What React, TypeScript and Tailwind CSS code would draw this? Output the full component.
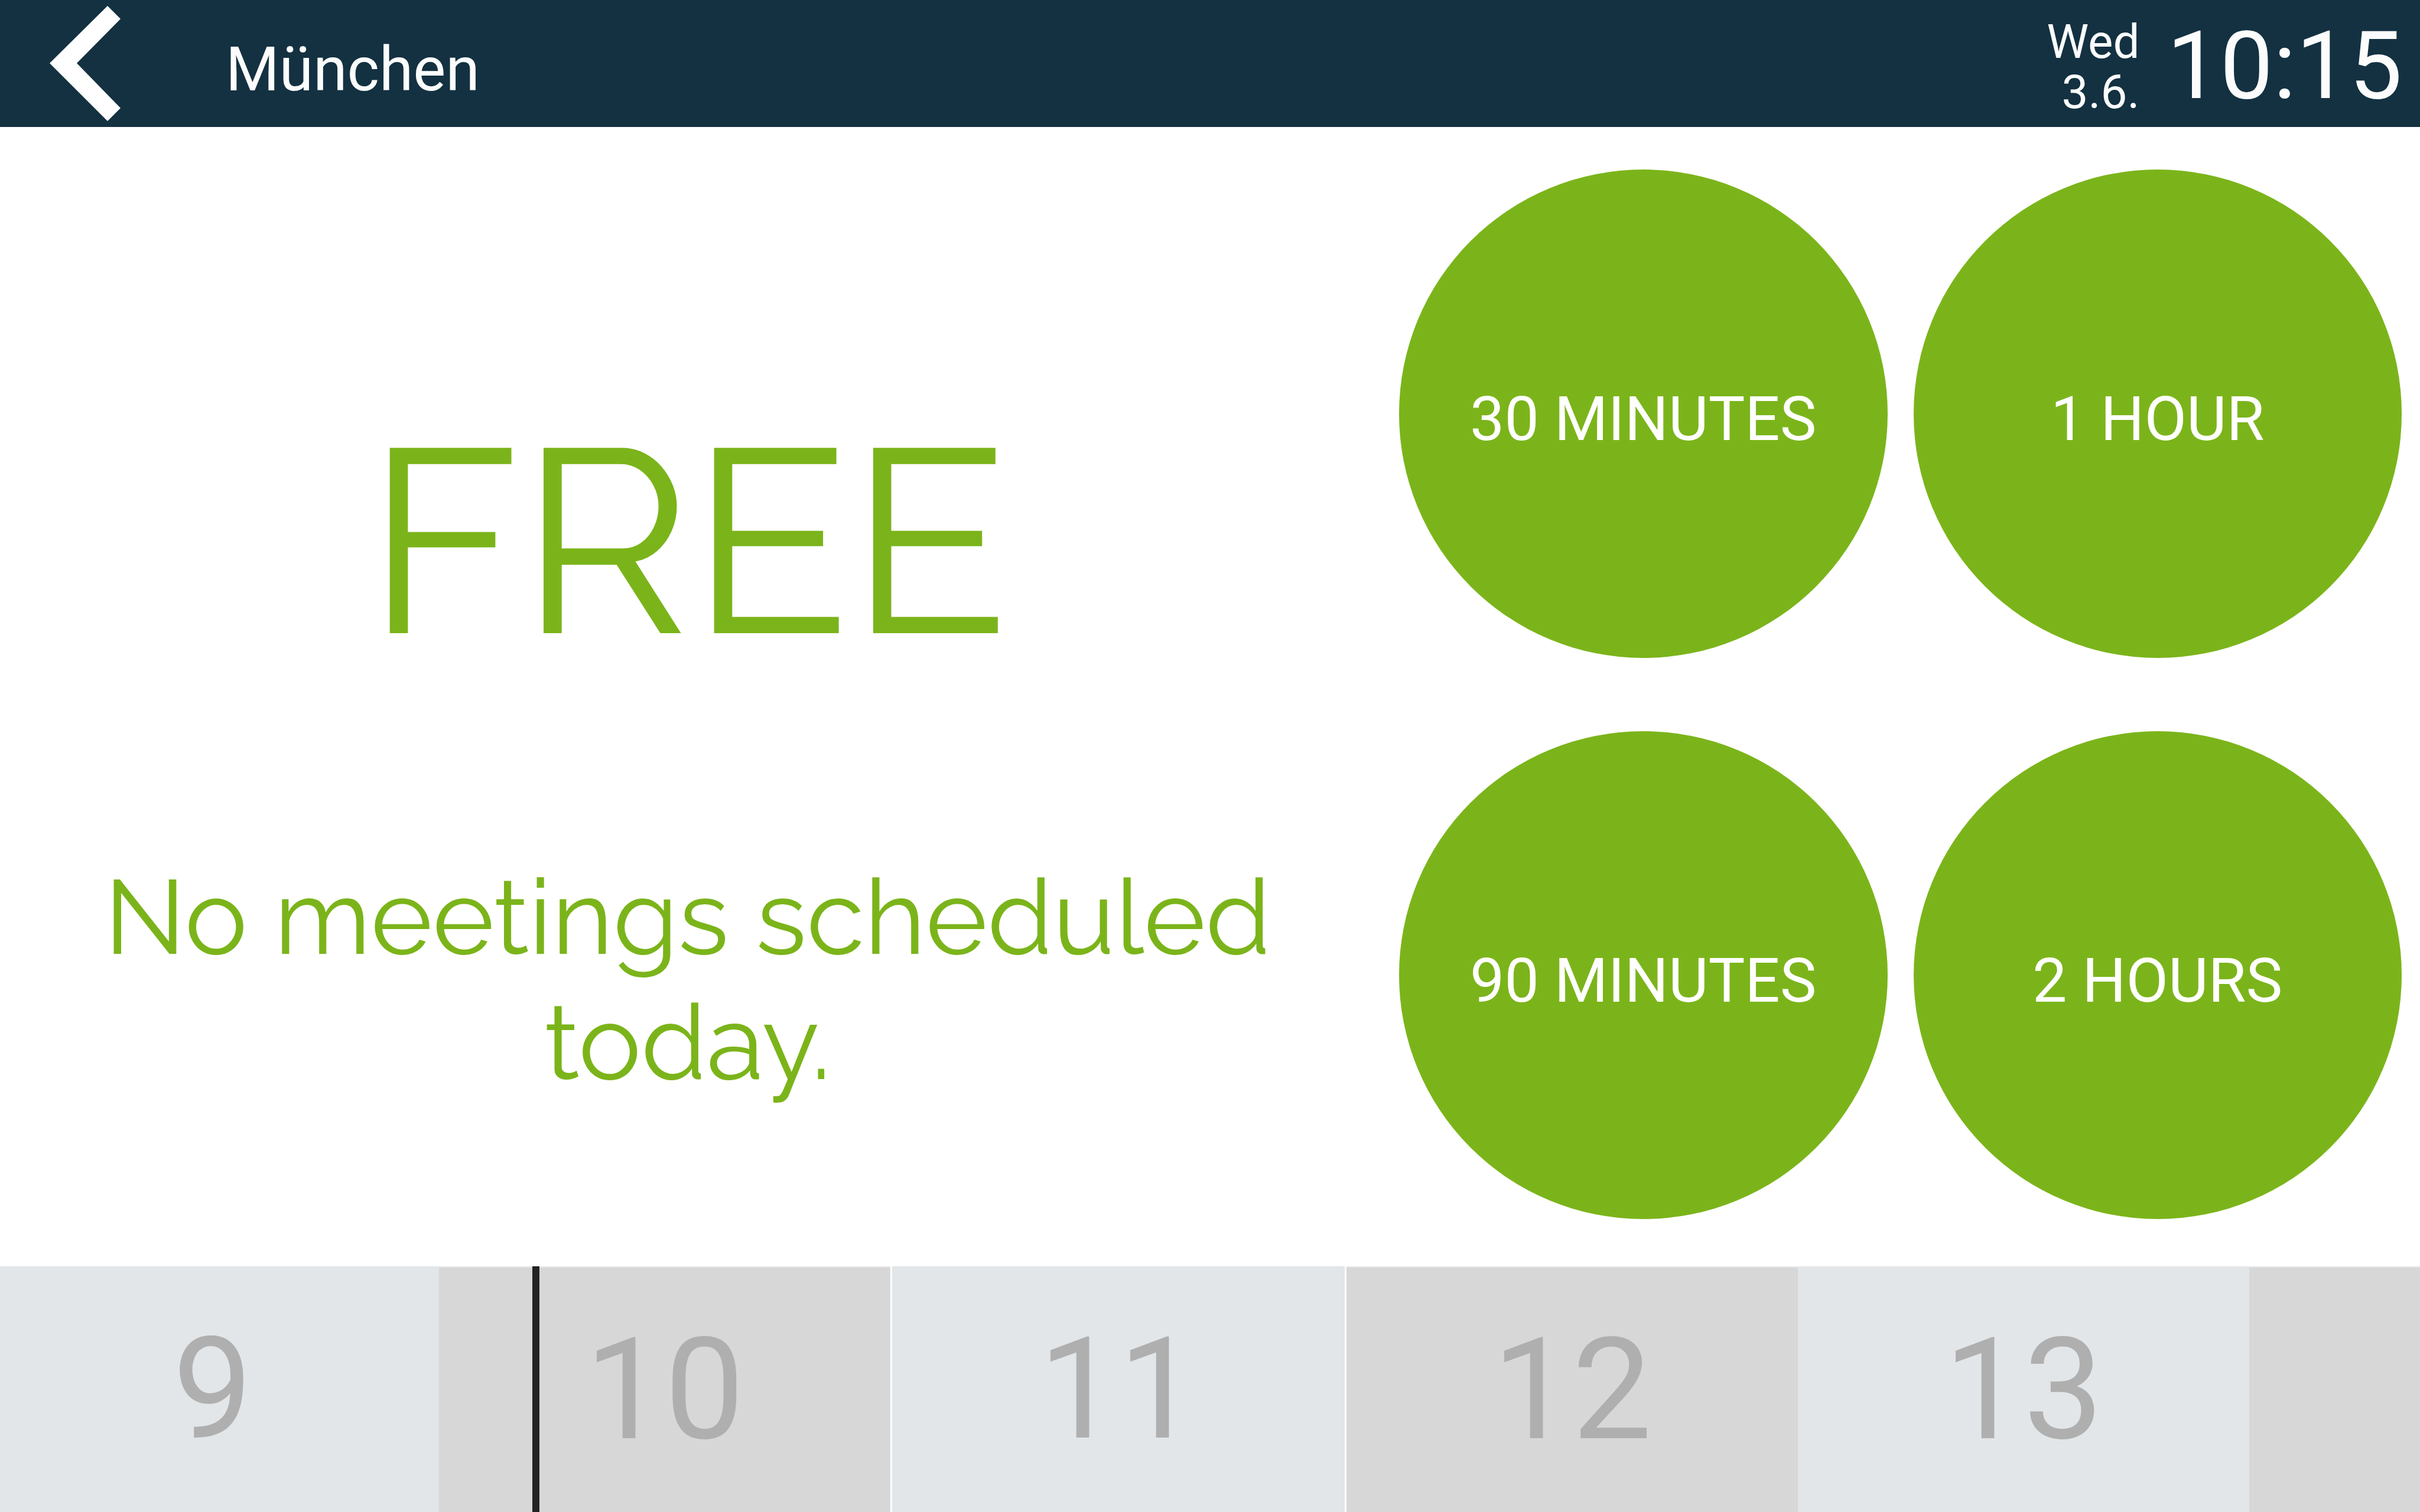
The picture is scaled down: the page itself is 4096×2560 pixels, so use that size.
const durations = ['30 MINUTES', '1 HOUR', '90 MINUTES', '2 HOURS'];

type Slot = { hour: string; className: string };

const slots: Slot[] = [
  { hour: '9', className: '-ml-[23px] w-[766px] bg-[#e2e6e8]' },
  { hour: '10', className: 'w-[764px] border-t-2 border-[#e8e8e8] bg-[#d7d7d7]' },
  { hour: '11', className: 'mx-[3px] w-[766px] bg-[#e2e6e8]' },
  { hour: '12', className: 'w-[764px] border-t-2 border-[#e8e8e8] bg-[#d7d7d7]' },
  { hour: '13', className: 'w-[764px] border-t-2 border-[#e8e8e8] bg-[#e2e6e8]' },
];

function Header() {
  return (
    <header className="flex h-[215px] items-center bg-[#133141] text-[#fcfcfc]">
      <button type="button" aria-label="Back" className="pl-20">
        <svg viewBox="80 0 128 215" className="h-[215px] w-32" fill="#ffffff" aria-hidden="true">
          <path d="M84 107 182 10 204 32 130 107 204 183 182 205Z" />
        </svg>
      </button>
      <h1 className="flex-1 pt-5 pl-[174px] text-[104px] leading-[122px]">München</h1>
      <time className="flex items-center gap-[46px] pt-2 pr-[30px]" dateTime="2015-06-03T10:15">
        <span className="pt-1 text-right text-[80px] leading-[85px]">
          Wed
          <br />
          3.6.
        </span>
        <span className="text-[160px] leading-[188px]">10:15</span>
      </time>
    </header>
  );
}

function Status() {
  return (
    <section className="flex flex-col items-center pt-[441px] pr-10 text-center font-['Raleway','Inter',sans-serif] text-[#7bb41a]">
      <h2 className="text-[442px] leading-[520px]">FREE</h2>
      <p className="mt-[271px] text-[178px] leading-[212px]">
        No meetings scheduled
        <br />
        today.
      </p>
    </section>
  );
}

function Booking() {
  return (
    <section aria-label="Book now" className="grid grid-cols-2 content-start gap-x-11 gap-y-[124px] pt-[72px] pr-[31px] pb-[78px]">
      {durations.map((label) => (
        <button
          key={label}
          type="button"
          className="flex aspect-square items-center justify-center rounded-full bg-[#7bb41a] pt-5 text-[104px] leading-[122px] text-white"
        >
          {label}
        </button>
      ))}
    </section>
  );
}

function Timeline() {
  return (
    <footer className="relative flex h-[416px] overflow-hidden text-[240px] leading-[282px] text-[#afafaf]">
      {slots.map(({ hour, className }) => (
        <div key={hour} className={`flex shrink-0 items-center justify-center ${className}`}>
          {hour}
        </div>
      ))}
      <div className="flex-1 border-t-2 border-[#e8e8e8] bg-[#d7d7d7]" />
      <div className="absolute inset-y-0 left-[22%] w-3 bg-[#222222]" />
    </footer>
  );
}

export default function App() {
  return (
    <div className="flex min-h-screen w-full flex-col bg-white font-['Roboto',sans-serif]">
      <Header />
      <main className="grid flex-1 grid-cols-[37fr_27fr]">
        <Status />
        <Booking />
      </main>
      <Timeline />
    </div>
  );
}
